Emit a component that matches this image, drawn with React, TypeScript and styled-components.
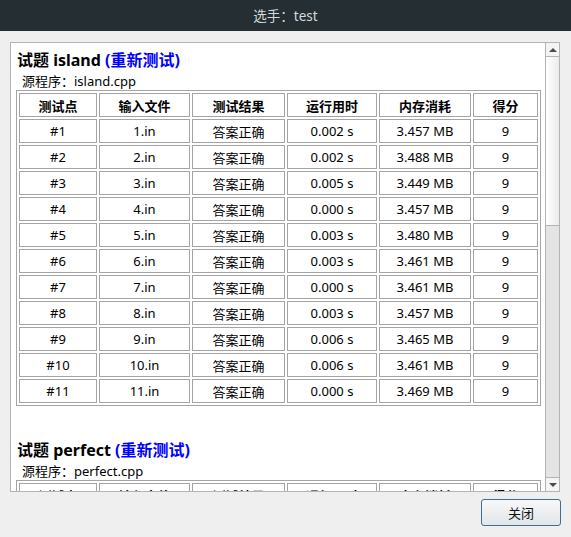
import React from 'react';
import styled, { createGlobalStyle } from 'styled-components';

type Row = {
  id: string;
  input: string;
  result: string;
  time: string;
  memory: string;
  score: number;
};

interface ProblemProps {
  name: string;
  source: string;
  rows: Row[];
}

const COLUMNS = ['测试点', '输入文件', '测试结果', '运行用时', '内存消耗', '得分'];

const islandData: [string, string][] = [
  ['0.002', '3.457'],
  ['0.002', '3.488'],
  ['0.005', '3.449'],
  ['0.000', '3.457'],
  ['0.003', '3.480'],
  ['0.003', '3.461'],
  ['0.000', '3.461'],
  ['0.003', '3.457'],
  ['0.006', '3.465'],
  ['0.006', '3.461'],
  ['0.000', '3.469'],
];

const islandRows: Row[] = islandData.map(([t, m], i) => ({
  id: `#${i + 1}`,
  input: `${i + 1}.in`,
  result: '答案正确',
  time: `${t} s`,
  memory: `${m} MB`,
  score: 9,
}));

const perfectRows: Row[] = islandRows.slice(0, 3).map((r) => ({ ...r, time: '0.001 s', score: 10 }));

const GlobalStyle = createGlobalStyle`
  html, body {
    margin: 0;
    padding: 0;
    background: #efefef;
  }
  body {
    font-family: "Noto Sans", "Noto Sans CJK SC", sans-serif;
    color: #000;
  }
`;

const Window = styled.div`
  width: 571px;
  height: 537px;
  display: flex;
  flex-direction: column;
  background: #efefef;
  overflow: hidden;
`;

const TitleBar = styled.div`
  height: 31px;
  flex: none;
  background: #242e33;
  color: #d6dadc;
  font-size: 13.5px;
  display: flex;
  align-items: center;
  justify-content: center;
  padding-bottom: 1px;
  box-sizing: border-box;
`;

const Body = styled.div`
  flex: 1;
  display: flex;
  flex-direction: column;
  padding: 11px 11px 0 10px;
`;

const Frame = styled.div`
  width: 550px;
  height: 450px;
  box-sizing: border-box;
  border: 1px solid #b4b4b4;
  background: #fff;
  display: flex;
`;

const Viewport = styled.div`
  flex: 1;
  overflow: hidden;
  padding: 7px 0 0 5px;
`;

const Section = styled.div`
  & + & {
    margin-top: 34px;
  }
`;

const Heading = styled.div`
  font-size: 16px;
  font-weight: bold;
  line-height: 20px;
  margin-left: 1px;
  white-space: nowrap;
`;

const Retest = styled.span`
  color: #0000ff;
`;

const Source = styled.div`
  font-size: 13px;
  line-height: 18px;
  margin: 2px 0 0 6px;
`;

const Grid = styled.div`
  width: 525px;
  box-sizing: border-box;
  border: 1px solid #a4a4a4;
  padding: 2px;
  display: grid;
  grid-template-columns: 78px 91px 93px 90px 92px 65px;
  gap: 2px;
`;

const Cell = styled.div<{ $head?: boolean }>`
  height: 24px;
  box-sizing: border-box;
  border: 1px solid #a4a4a4;
  display: flex;
  align-items: center;
  justify-content: center;
  font-size: 13px;
  font-weight: ${(p) => (p.$head ? 'bold' : 'normal')};
  white-space: nowrap;
`;

const ScrollBar = styled.div`
  width: 13px;
  flex: none;
  border-left: 1px solid #b4b4b4;
  display: flex;
  flex-direction: column;
  background: #e4e4e4;
`;

const Arrow = styled.div<{ $down?: boolean }>`
  height: 13px;
  flex: none;
  background: #f4f4f4;
  display: flex;
  align-items: center;
  justify-content: center;
  border-top: ${(p) => (p.$down ? '1px solid #b4b4b4' : 'none')};
  border-bottom: ${(p) => (p.$down ? 'none' : '1px solid #b4b4b4')};

  &::before {
    content: '';
    border-left: 4px solid transparent;
    border-right: 4px solid transparent;
    ${(p) => (p.$down ? 'border-top: 4px solid #4a4a4a;' : 'border-bottom: 4px solid #4a4a4a;')}
  }
`;

const Thumb = styled.div`
  height: 168px;
  flex: none;
  border-bottom: 1px solid #b4b4b4;
  background: linear-gradient(to right, #ffffff, #ececec);
`;

const Track = styled.div`
  flex: 1;
`;

const Footer = styled.div`
  display: flex;
  justify-content: flex-end;
  padding-top: 7px;
  margin-right: -1px;
`;

const Button = styled.button`
  width: 80px;
  height: 27px;
  border: 1px solid #3f6e92;
  border-radius: 3px;
  background: linear-gradient(to bottom, #f7f8f9, #e2e6ea);
  font-family: "Noto Sans", "Noto Sans CJK SC", sans-serif;
  font-size: 13px;
  color: #111;
  padding: 0;
  cursor: pointer;
`;

const Problem: React.FC<ProblemProps> = ({ name, source, rows }) => (
  <Section>
    <Heading>
      试题 {name} <Retest>(重新测试)</Retest>
    </Heading>
    <Source>源程序：{source}</Source>
    <Grid>
      {COLUMNS.map((c) => (
        <Cell key={c} $head>
          {c}
        </Cell>
      ))}
      {rows.map((r) => (
        <React.Fragment key={r.id}>
          <Cell>{r.id}</Cell>
          <Cell>{r.input}</Cell>
          <Cell>{r.result}</Cell>
          <Cell>{r.time}</Cell>
          <Cell>{r.memory}</Cell>
          <Cell>{r.score}</Cell>
        </React.Fragment>
      ))}
    </Grid>
  </Section>
);

export default function App() {
  return (
    <Window>
      <GlobalStyle />
      <TitleBar>选手：test</TitleBar>
      <Body>
        <Frame>
          <Viewport>
            <Problem name="island" source="island.cpp" rows={islandRows} />
            <Problem name="perfect" source="perfect.cpp" rows={perfectRows} />
          </Viewport>
          <ScrollBar>
            <Arrow />
            <Thumb />
            <Track />
            <Arrow $down />
          </ScrollBar>
        </Frame>
        <Footer>
          <Button>关闭</Button>
        </Footer>
      </Body>
    </Window>
  );
}
